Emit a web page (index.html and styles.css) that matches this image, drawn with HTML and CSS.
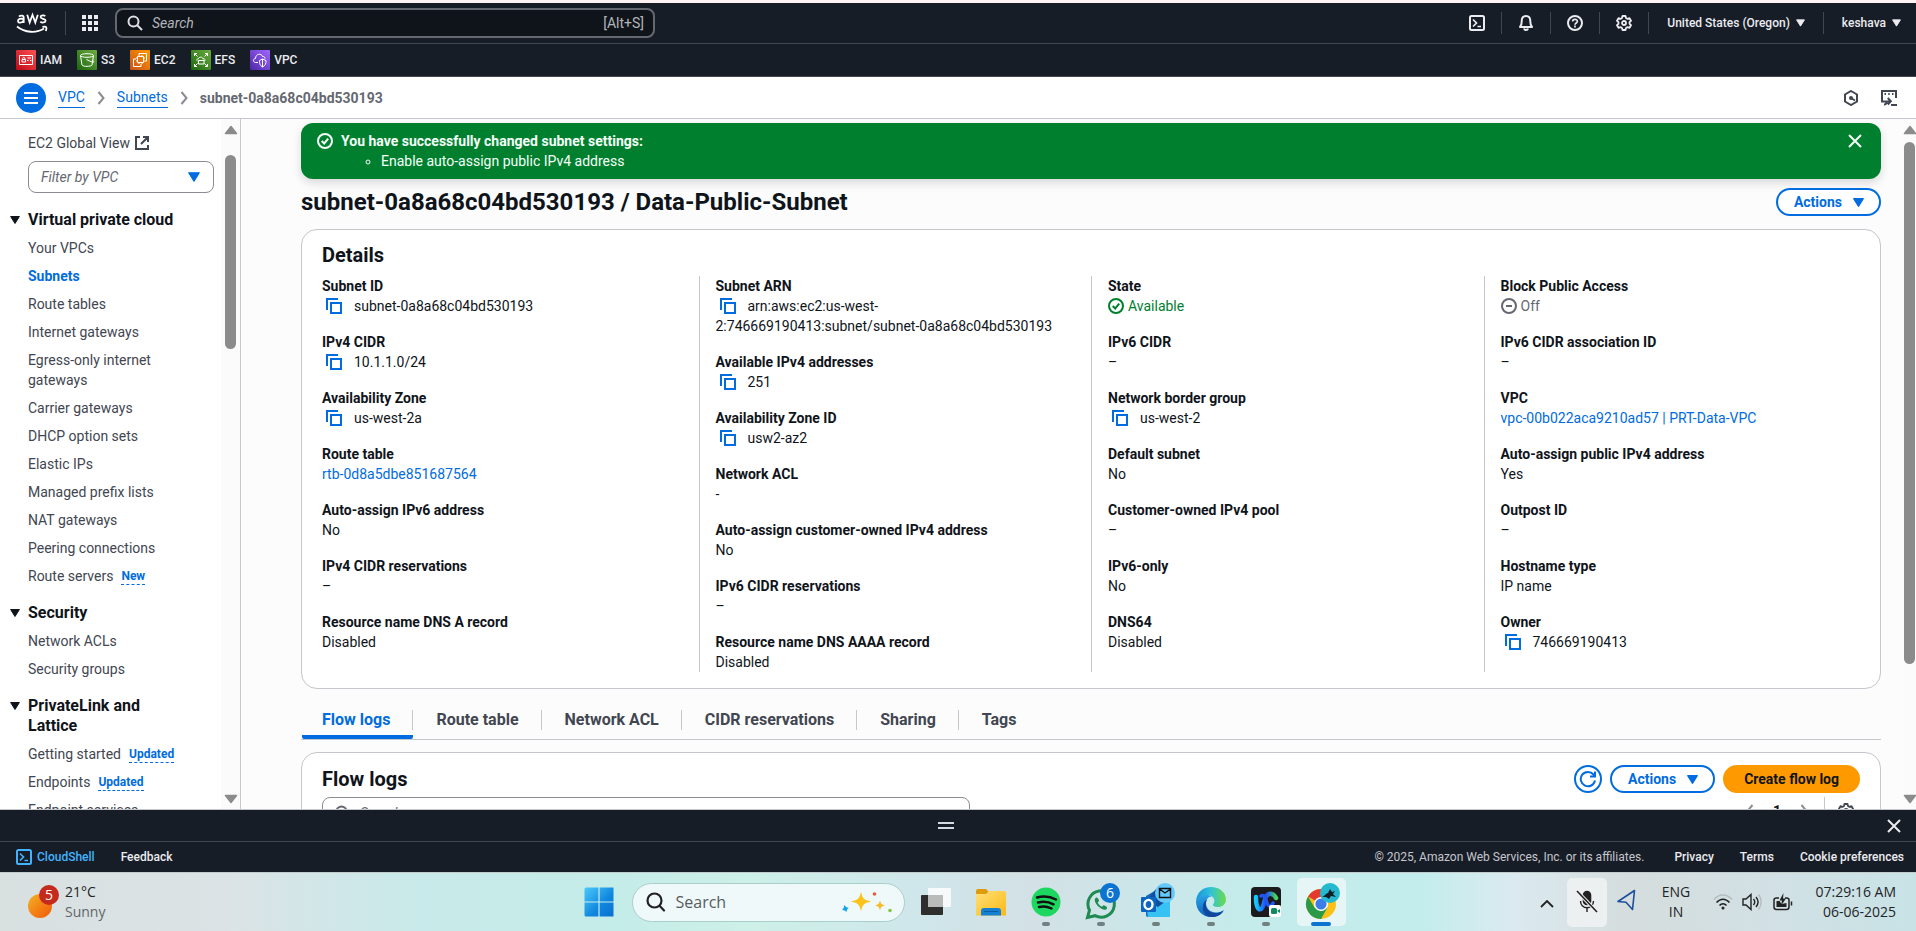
FILE: index.html
```html
<!DOCTYPE html>
<html lang="en">
<head>
<meta charset="utf-8">
<title>subnet-0a8a68c04bd530193 | VPC Console</title>
<link rel="stylesheet" href="styles.css">
</head>
<body>
<svg class="defs" aria-hidden="true">
  <symbol id="copy" viewBox="0 0 16 16"><path d="M1 12V1h11M5 5h10v10H5z" fill="none" stroke="currentColor" stroke-width="2"/></symbol>
  <symbol id="caret" viewBox="0 0 10 8"><path d="M.6.5h8.800L5 7.500z" fill="currentColor" stroke="currentColor" stroke-linejoin="round"/></symbol>
  <symbol id="close" viewBox="0 0 16 16"><path d="M2 2l12 12M14 2L2 14" fill="none" stroke="currentColor" stroke-width="2"/></symbol>
  <symbol id="check" viewBox="0 0 16 16"><circle cx="8" cy="8" r="7" fill="none" stroke="currentColor" stroke-width="2"/><path d="M4.700 8l2.500 2.500 4-4.800" fill="none" stroke="currentColor" stroke-width="2"/></symbol>
  <symbol id="search" viewBox="0 0 16 16"><circle cx="6.500" cy="6.500" r="5" fill="none" stroke="currentColor" stroke-width="2"/><path d="M10 10l5 5" stroke="currentColor" stroke-width="2"/></symbol>
  <symbol id="chevron" viewBox="0 0 8 14"><path d="M1.500 1l5 6-5 6" fill="none" stroke="currentColor" stroke-width="2"/></symbol>
  <symbol id="shell" viewBox="0 0 16 16"><rect x="1" y="1" width="14" height="14" rx="1.500" fill="none" stroke="currentColor" stroke-width="2"/><path d="M4 4.500L7.500 8 4 11.500M8.500 11.500H12" fill="none" stroke="currentColor" stroke-width="1.700"/></symbol>
  <symbol id="gear" viewBox="0 0 16 16"><path d="M6.500 1h3l.5 2 1.500.9 2-.7 1.500 2.600L13.500 7.200v1.600l1.500 1.400-1.500 2.600-2-.7-1.500.9-.5 2h-3L6 13l-1.500-.9-2 .7L1 10.200l1.500-1.400V7.200L1 5.800l1.500-2.600 2 .7L6 3z" fill="none" stroke="currentColor" stroke-width="1.800" stroke-linejoin="round"/><circle cx="8" cy="8" r="2" fill="none" stroke="currentColor" stroke-width="1.800"/></symbol>
  <symbol id="up" viewBox="0 0 14 10"><path d="M7 1.500L12.500 8.500h-11z" fill="currentColor" stroke="currentColor" stroke-width="1.500" stroke-linejoin="round"/></symbol>
  <linearGradient id="gRed" x1="0" y1="1" x2="1" y2="0"><stop stop-color="#bd0816"/><stop offset="1" stop-color="#ff5252"/></linearGradient>
  <linearGradient id="gGreen" x1="0" y1="1" x2="1" y2="0"><stop stop-color="#1b660f"/><stop offset="1" stop-color="#6cae3e"/></linearGradient>
  <linearGradient id="gOrange" x1="0" y1="1" x2="1" y2="0"><stop stop-color="#c8511b"/><stop offset="1" stop-color="#f90"/></linearGradient>
  <linearGradient id="gPurple" x1="0" y1="1" x2="1" y2="0"><stop stop-color="#4d27a8"/><stop offset="1" stop-color="#a166ff"/></linearGradient>
  <linearGradient id="gSun" x1="0" y1="0" x2="1" y2="1"><stop stop-color="#f2b428"/><stop offset=".6" stop-color="#f47a12"/><stop offset="1" stop-color="#ee5a0c"/></linearGradient>
  <linearGradient id="gWin" x1="0" y1="0" x2="1" y2="1"><stop stop-color="#4cc9fb"/><stop offset=".6" stop-color="#0f86de"/><stop offset="1" stop-color="#0a6fd0"/></linearGradient>
  <linearGradient id="gFold" x1="0" y1="0" x2="1" y2="1"><stop stop-color="#ffe07a"/><stop offset="1" stop-color="#fbb914"/></linearGradient>
  <linearGradient id="gEdge" x1="0" y1="0" x2="1" y2="0"><stop stop-color="#1794dd"/><stop offset=".5" stop-color="#31c3d8"/><stop offset="1" stop-color="#6edb46"/></linearGradient>
  <linearGradient id="gEdge2" x1="0" y1="0" x2="0" y2="1"><stop stop-color="#2aa5e4"/><stop offset="1" stop-color="#0b62c0"/></linearGradient>
  <linearGradient id="gWx" x1="0" y1="0" x2="1" y2="0"><stop stop-color="#16c8ff"/><stop offset=".5" stop-color="#1f4cff"/><stop offset="1" stop-color="#45d65c"/></linearGradient>
</svg>

<header class="topbar">
  <a class="logo" href="#" aria-label="AWS"><svg width="32" height="22" viewBox="0 0 32 22" fill="none" stroke="#fff" stroke-width="1.800"><path d="M3 4.600c1.200-1.400 4.700-1.600 4.700.9V11M7.700 7c-3-.6-5.700-.2-5.700 2 0 2.700 4.500 2 5.700-.6M11.200 2.800l2.500 7.700 2.800-7.700 2.800 7.700 2.500-7.700M29.300 4c-1.500-.9-4.700-.9-4.700 1.100 0 2.200 5 1.100 5 3.600 0 2.100-3.600 2.300-5.300 1"/><path d="M1 14.500c8 6.500 19.500 6.800 27 2M26.500 15c3.500-.8 5-.3 3.200 4" stroke-width="1.800"/></svg></a>
  <span class="sep"></span>
  <button class="icon-btn apps" aria-label="Services"><svg width="16" height="16" viewBox="0 0 16 16" fill="currentColor"><path d="M0 0h4v4H0zM6 0h4v4H6zM12 0h4v4h-4zM0 6h4v4H0zM6 6h4v4H6zM12 6h4v4h-4zM0 12h4v4H0zM6 12h4v4H6zM12 12h4v4h-4z"/></svg></button>
  <label class="global-search"><svg width="16" height="16"><use href="#search"/></svg><input type="text" placeholder="Search" aria-label="Search"><kbd>[Alt+S]</kbd></label>
  <div class="tools">
    <button class="icon-btn" aria-label="CloudShell"><svg width="16" height="16"><use href="#shell"/></svg></button><span class="sep"></span>
    <button class="icon-btn" aria-label="Notifications"><svg width="16" height="16" viewBox="0 0 16 16" fill="none" stroke="currentColor" stroke-width="2"><path d="M2 12c1.800-1.800 1.700-3.500 1.700-6C3.700 3 5.300 1 8 1s4.300 2 4.300 5c0 2.500-.1 4.200 1.700 6zM6 13.500c.5 2 3.500 2 4 0" stroke-linejoin="round"/></svg></button><span class="sep"></span>
    <button class="icon-btn" aria-label="Help"><svg width="16" height="16" viewBox="0 0 16 16" fill="none" stroke="currentColor" stroke-width="2"><circle cx="8" cy="8" r="7"/><path d="M5.600 6.600C5.600 3.500 10.400 3.700 10.400 6.300 10.400 8 8 7.900 8 9.800M8 10.600v1.800" stroke-width="1.700"/></svg></button><span class="sep"></span>
    <button class="icon-btn" aria-label="Settings"><svg width="16" height="16"><use href="#gear"/></svg></button><span class="sep"></span>
    <button class="menu-btn">United States (Oregon)<svg width="9" height="8"><use href="#caret"/></svg></button><span class="sep"></span>
    <button class="menu-btn account">keshava<svg width="9" height="8"><use href="#caret"/></svg></button>
  </div>
</header>

<nav class="favorites" aria-label="Favorites">
  <a href="#"><svg width="20" height="20" viewBox="0 0 20 20"><rect width="20" height="20" rx="1" fill="url(#gRed)"/><g fill="none" stroke="#fff"><path d="M3.500 5.500h13v9h-13zM6 9.500h3.500v2.500H6zM11 10.500h1.500M14 10.500h1.500M11.500 8h3.500M6.700 9.500V8.300c0-1.300 2.100-1.300 2.100 0v1.200"/></g></svg>IAM</a>
  <a href="#"><svg width="20" height="20" viewBox="0 0 20 20"><rect width="20" height="20" rx="1" fill="url(#gGreen)"/><g fill="none" stroke="#fff"><ellipse cx="10" cy="5.500" rx="6.500" ry="1.800"/><path d="M3.500 5.500L5 15c1 1.800 9 1.800 10 0l1.500-9.500M9.500 9.500l6 2.800c2 .5 1.500-1.300-.3-2.300"/></g></svg>S3</a>
  <a href="#"><svg width="20" height="20" viewBox="0 0 20 20"><rect width="20" height="20" rx="1" fill="url(#gOrange)"/><g fill="none" stroke="#fff"><path d="M7.500 6.500h6v6h-6zM9 5v1.500M12 5v1.500M9 12.500V14M12 12.500V14M6 8h1.500M6 11h1.500M13.500 8H15M13.500 11H15M9 5V3.500h7.500V11H15M6 9H3.500v7.500H11V14"/></g></svg>EC2</a>
  <a href="#"><svg width="20" height="20" viewBox="0 0 20 20"><rect width="20" height="20" rx="1" fill="url(#gGreen)"/><g fill="none" stroke="#fff"><path d="M3.500 6V3.500H6M3.500 3.500l3 3M14 3.500h2.500V6M16.500 3.500l-3 3M3.500 14v2.500H6M3.500 16.500l3-3M14 16.500h2.500V14M16.500 16.500l-3-3M6.500 11c-2-1 0-2.500.8-2 .5-2.500 4.200-2.500 4.700-.2 2.300-.3 2.500 1.800 1.300 2.200M7.500 10.500h5.500v3.500H7.500z"/></g></svg>EFS</a>
  <a href="#"><svg width="20" height="20" viewBox="0 0 20 20"><rect width="20" height="20" rx="1" fill="url(#gPurple)"/><g fill="none" stroke="#fff"><path d="M8 12.500H5.500C2.500 12.200 3 8.500 5.500 8.500 5.500 3.500 11.500 3 12.500 6.500c2-.3 2.500 1 2.500 2M9.500 10.500l3-1.500 3.500 1.500c.3 3-.8 5-3.500 6.500-2.500-1.500-3.200-3.500-3-6.500zM12.500 9v8"/></g></svg>VPC</a>
</nav>

<div class="crumb-bar">
  <button class="nav-toggle" aria-label="Toggle navigation"><svg width="14" height="12" viewBox="0 0 14 12" stroke="#fff" stroke-width="2"><path d="M0 1h14M0 6h14M0 11h14"/></svg></button>
  <nav class="crumbs" aria-label="Breadcrumb">
    <a href="#">VPC</a><svg width="8" height="14"><use href="#chevron"/></svg><a href="#">Subnets</a><svg width="8" height="14"><use href="#chevron"/></svg><span>subnet-0a8a68c04bd530193</span>
  </nav>
  <div class="crumb-tools">
    <button class="icon-btn" aria-label="Info"><svg width="16" height="16" viewBox="0 0 16 16" fill="none" stroke="currentColor" stroke-width="2"><path d="M8 1l6 3.500v7L8 15l-6-3.500v-7z"/><circle cx="8" cy="8" r="2" fill="currentColor" stroke="none"/><path d="M8 8l4 2.500"/></svg></button>
    <button class="icon-btn" aria-label="Panel"><svg width="16" height="16" viewBox="0 0 16 16" fill="none" stroke="currentColor" stroke-width="2"><path d="M5 11.500H1V1h14v7M3.500 4h1.500M7.200 4h1.500M11 4h1.500M10 15h6M3 14.500c1.500.2 2.500-1 3-3h3M6.800 8l3 3.200-3 3.300"/></svg></button>
  </div>
</div>

<div class="workspace">
  <aside class="sidebar">
    <div class="side-scroll">
      <a class="global-view" href="#">EC2 Global View<svg width="14" height="14" viewBox="0 0 14 14" fill="none" stroke="currentColor" stroke-width="2"><path d="M5 1H1v12h12V9M8 1h5v5M13 1L6 8"/></svg></a>
      <div class="filter"><select aria-label="Filter by VPC"><option>Filter by VPC</option></select><svg width="12" height="10"><use href="#caret"/></svg></div>
      <section><h3><svg width="10" height="8"><use href="#caret"/></svg>Virtual private cloud</h3>
        <ul><li><a href="#">Your VPCs</a></li><li><a class="current" href="#">Subnets</a></li><li><a href="#">Route tables</a></li><li><a href="#">Internet gateways</a></li><li><a href="#">Egress-only internet gateways</a></li><li><a href="#">Carrier gateways</a></li><li><a href="#">DHCP option sets</a></li><li><a href="#">Elastic IPs</a></li><li><a href="#">Managed prefix lists</a></li><li><a href="#">NAT gateways</a></li><li><a href="#">Peering connections</a></li><li><a href="#">Route servers</a><em>New</em></li></ul></section>
      <section><h3><svg width="10" height="8"><use href="#caret"/></svg>Security</h3>
        <ul><li><a href="#">Network ACLs</a></li><li><a href="#">Security groups</a></li></ul></section>
      <section><h3><svg width="10" height="8"><use href="#caret"/></svg>PrivateLink and Lattice</h3>
        <ul><li><a href="#">Getting started</a><em>Updated</em></li><li><a href="#">Endpoints</a><em>Updated</em></li><li><a href="#">Endpoint services</a></li></ul></section>
    </div>
    <div class="scrollbar"><svg width="14" height="10"><use href="#up"/></svg><div class="track"><i class="thumb thumb-side"></i></div><svg class="down" width="14" height="10"><use href="#up"/></svg></div>
  </aside>

  <main>
    <div class="page">
      <div class="flash" role="status">
        <svg width="16" height="16"><use href="#check"/></svg>
        <div><strong>You have successfully changed subnet settings:</strong><ul><li>Enable auto-assign public IPv4 address</li></ul></div>
        <button class="icon-btn" aria-label="Dismiss"><svg width="16" height="16"><use href="#close"/></svg></button>
      </div>
      <div class="title-row"><h1>subnet-0a8a68c04bd530193 / Data-Public-Subnet</h1><button class="btn">Actions<svg width="11" height="9"><use href="#caret"/></svg></button></div>

      <section class="card details">
        <h2>Details</h2>
        <div class="columns">
          <dl>
            <div><dt>Subnet ID</dt><dd><svg class="copy"><use href="#copy"/></svg>subnet-0a8a68c04bd530193</dd></div>
            <div><dt>IPv4 CIDR</dt><dd><svg class="copy"><use href="#copy"/></svg>10.1.1.0/24</dd></div>
            <div><dt>Availability Zone</dt><dd><svg class="copy"><use href="#copy"/></svg>us-west-2a</dd></div>
            <div><dt>Route table</dt><dd><a href="#">rtb-0d8a5dbe851687564</a></dd></div>
            <div><dt>Auto-assign IPv6 address</dt><dd>No</dd></div>
            <div><dt>IPv4 CIDR reservations</dt><dd>–</dd></div>
            <div><dt>Resource name DNS A record</dt><dd>Disabled</dd></div>
          </dl>
          <dl>
            <div><dt>Subnet ARN</dt><dd><svg class="copy"><use href="#copy"/></svg>arn:aws:ec2:us-west-<wbr><span class="nowrap">2:746669190413:subnet/subnet-0a8a68c04bd530193</span></dd></div>
            <div><dt>Available IPv4 addresses</dt><dd><svg class="copy"><use href="#copy"/></svg>251</dd></div>
            <div><dt>Availability Zone ID</dt><dd><svg class="copy"><use href="#copy"/></svg>usw2-az2</dd></div>
            <div><dt>Network ACL</dt><dd>-</dd></div>
            <div><dt>Auto-assign customer-owned IPv4 address</dt><dd>No</dd></div>
            <div><dt>IPv6 CIDR reservations</dt><dd>–</dd></div>
            <div><dt>Resource name DNS AAAA record</dt><dd>Disabled</dd></div>
          </dl>
          <dl>
            <div><dt>State</dt><dd class="status ok"><svg width="16" height="16"><use href="#check"/></svg>Available</dd></div>
            <div><dt>IPv6 CIDR</dt><dd>–</dd></div>
            <div><dt>Network border group</dt><dd><svg class="copy"><use href="#copy"/></svg>us-west-2</dd></div>
            <div><dt>Default subnet</dt><dd>No</dd></div>
            <div><dt>Customer-owned IPv4 pool</dt><dd>–</dd></div>
            <div><dt>IPv6-only</dt><dd>No</dd></div>
            <div><dt>DNS64</dt><dd>Disabled</dd></div>
          </dl>
          <dl>
            <div><dt>Block Public Access</dt><dd class="status off"><svg width="16" height="16" viewBox="0 0 16 16" fill="none" stroke="currentColor" stroke-width="2"><circle cx="8" cy="8" r="7"/><path d="M5 8h6"/></svg>Off</dd></div>
            <div><dt>IPv6 CIDR association ID</dt><dd>–</dd></div>
            <div><dt>VPC</dt><dd><a href="#">vpc-00b022aca9210ad57 | PRT-Data-VPC</a></dd></div>
            <div><dt>Auto-assign public IPv4 address</dt><dd>Yes</dd></div>
            <div><dt>Outpost ID</dt><dd>–</dd></div>
            <div><dt>Hostname type</dt><dd>IP name</dd></div>
            <div><dt>Owner</dt><dd><svg class="copy"><use href="#copy"/></svg>746669190413</dd></div>
          </dl>
        </div>
      </section>

      <div class="tabs" role="tablist">
        <button role="tab" aria-selected="true">Flow logs</button><button role="tab">Route table</button><button role="tab">Network ACL</button><button role="tab">CIDR reservations</button><button role="tab">Sharing</button><button role="tab">Tags</button>
      </div>

      <section class="card flow">
        <div class="flow-head"><h2>Flow logs</h2>
          <button class="btn round" aria-label="Refresh"><svg width="18" height="18" viewBox="0 0 18 18" fill="none" stroke="currentColor" stroke-width="2"><path d="M16 10.500A7.200 7.200 0 1 1 14.500 4.500L16 6.500M16 1.500v5h-5"/></svg></button>
          <button class="btn">Actions<svg width="11" height="9"><use href="#caret"/></svg></button>
          <button class="btn primary">Create flow log</button></div>
        <div class="flow-tools">
          <label class="table-search"><svg width="16" height="16"><use href="#search"/></svg><input type="text" placeholder="Search" aria-label="Search flow logs"></label>
          <div class="pager"><button class="icon-btn flip" aria-label="Previous page"><svg width="8" height="14"><use href="#chevron"/></svg></button><b>1</b><button class="icon-btn" aria-label="Next page"><svg width="8" height="14"><use href="#chevron"/></svg></button><span class="rule"></span><button class="icon-btn prefs" aria-label="Preferences"><svg width="16" height="16"><use href="#gear"/></svg></button></div>
        </div>
      </section>
    </div>
    <div class="scrollbar"><svg width="14" height="10"><use href="#up"/></svg><div class="track"><i class="thumb thumb-main"></i></div><svg class="down" width="14" height="10"><use href="#up"/></svg></div>
  </main>
</div>

<div class="split-panel"><span></span><svg width="16" height="7" viewBox="0 0 16 7" fill="#d5d9e0"><path d="M0 0h16v2H0zM0 5h16v2H0z"/></svg><span></span><button class="icon-btn" aria-label="Close panel"><svg width="16" height="16"><use href="#close"/></svg></button></div>
<footer class="console-footer">
  <a class="shell" href="#"><svg width="16" height="16"><use href="#shell"/></svg>CloudShell</a><a class="feedback" href="#">Feedback</a>
  <span class="legal">© 2025, Amazon Web Services, Inc. or its affiliates.</span><a href="#">Privacy</a><a href="#">Terms</a><a href="#">Cookie preferences</a>
</footer>

<div class="taskbar">
  <div class="weather">
    <svg width="32" height="34" viewBox="0 0 32 34"><circle cx="12" cy="21" r="12" fill="url(#gSun)"/><circle cx="21" cy="10" r="10" fill="#c42b1c"/><text x="21" y="15" text-anchor="middle" class="badge-num">5</text></svg>
    <div><span>21°C</span><span class="dim">Sunny</span></div>
  </div>
  <div class="dock">
    <button class="slot" aria-label="Start"><svg width="30" height="30" viewBox="0 0 30 30" fill="url(#gWin)"><path d="M.5 2q0-1.500 1.500-1.500h27.500V29.500H2Q.5 29.500.5 28z"/><path d="M15 0v30M0 15h30" stroke="#c8efee" stroke-width="1.200"/></svg></button>
    <label class="win-search"><svg width="20" height="20" viewBox="0 0 20 20" fill="none" stroke="#222" stroke-width="2.200" stroke-linecap="round"><circle cx="8.500" cy="8.500" r="7"/><path d="M13.800 14l4.200 4.500"/></svg><input type="text" placeholder="Search" aria-label="Search Windows"><svg width="52" height="22" viewBox="0 0 52 22"><path d="M20 1c2 7 2.500 7.500 10 9.500-7.500 2-8 2.500-10 9.500-2-7-2.500-7.500-10-9.500C17.500 8.500 18 8 20 1z" fill="#fbc21c"/><path d="M39 9.500c1 3.500 1.300 3.800 5 5-3.700 1-4 1.300-5 5-1-3.700-1.300-4-5-5 3.700-1.200 4-1.500 5-5z" fill="#f9b92a"/><path d="M3.500 14l1.800 2.200 2.400.6-1.700 1.900-.4 2.400-2-1.700-2.500-.3 1.500-2.200z" fill="#12a5ec"/><circle cx="33.500" cy="3" r="1.800" fill="#ee5a30"/><circle cx="49" cy="19.500" r="1.800" fill="#86c440"/></svg></label>
    <button class="slot" aria-label="Task view"><svg width="30" height="30" viewBox="0 0 30 30"><rect y="8" width="22" height="20" rx="1" fill="#2e2e2c"/><rect x="7" y="1" width="23" height="19" rx="1" fill="#fff" opacity=".8"/><path d="M7 8h15v12H7z" fill="#b9baba"/></svg></button>
    <button class="slot" aria-label="File Explorer"><svg width="30" height="30" viewBox="0 0 30 30"><path d="M0 4q0-2 2-2h8l3 3h-1v6H0z" fill="#dd9b0e"/><path d="M0 7h10l3-3h15q2 0 2 2v22.500H0z" fill="url(#gFold)"/><path d="M5 28.500V24q0-3 3-3h14q3 0 3 3v4.500z" fill="#1580d2"/><path d="M8 24.500h14" stroke="#0a5aa5"/></svg></button>
    <button class="slot on" aria-label="Spotify"><svg width="30" height="30" viewBox="0 0 30 30"><circle cx="15" cy="15" r="14.500" fill="#1ed760"/><path d="M6 10.500c6-1.800 13.500-1 19 2M7 15.500c5-1.400 11-.7 15.500 1.800M8 20c4-1 8.500-.6 12.500 1.500" fill="none" stroke="#111" stroke-width="2.500" stroke-linecap="round"/></svg></button>
    <button class="slot on" aria-label="WhatsApp"><svg width="38" height="38" viewBox="-4 -6 38 38"><path d="M1.500 28.500l2-7.300A13.200 13.200 0 1 1 9 26.700z" fill="none" stroke="#1f8a52" stroke-width="3"/><path d="M10 8.500c-3 2 0 7 3 9.500s6.500 3.800 8 1.500c.8-1.500-2.800-3.300-3.600-3.200l-1.400 1.500c-2-.8-3.500-2.500-4.300-4.200L13 12c.2-.8-1.200-4-3-3.500z" fill="#1f8a52"/><circle cx="24" cy="4" r="10" fill="#0b74d1"/><text x="24" y="9" text-anchor="middle" class="badge-num">6</text></svg></button>
    <button class="slot on" aria-label="Outlook"><svg width="38" height="38" viewBox="-4 -6 38 38"><path d="M5 7l12-7 12 7v19q0 2-2 2H7q-2 0-2-2z" fill="#1668b8"/><path d="M5 14l24-7v19.500q0 1.500-1.500 1.500H7z" fill="#38c2f3"/><path d="M5 12l12 6 12-9V4L15 0z" fill="#0f4fa0"/><rect y="8" width="15" height="15" rx="1" fill="#0d65c2"/><ellipse cx="7.500" cy="15.500" rx="4" ry="4.600" fill="none" stroke="#fff" stroke-width="2.400"/><circle cx="24" cy="4" r="10" fill="#63c8fb"/><path d="M18.500-.5h11v9h-11zM18.500 0l5.500 4 5.500-4" fill="none" stroke="#111" stroke-width="1.400"/></svg></button>
    <button class="slot on" aria-label="Edge"><svg width="30" height="30" viewBox="0 0 30 30"><path d="M0 14C1 5 7 0 15 0c8.500 0 15 5.500 15 12.500 0 5-4 7.500-8 7.500-3.500 0-5.500-1.500-5-2.500 1.500-2 2-4 .5-6.500C14 6 4 7 0 14z" fill="url(#gEdge)"/><path d="M0 14C3 7.500 11 6 15.500 9.500 12 9.500 10 13 10 16c0 6 5 10 11 9.500 2.500 0 5-1 7-2.500C25 28 20 30 15 30 7 30 0 24 0 14z" fill="url(#gEdge2)"/><path d="M11 12.500c-3 6 0 12.500 7 13.500 4 .5 7-.8 9.500-2.500C24 31 14 31 10.500 28.500 5 24 6 15 11 12.500z" fill="#12489c"/></svg></button>
    <button class="slot on" aria-label="Webex"><svg width="30" height="30" viewBox="0 0 30 30"><rect width="30" height="30" rx="4" fill="#1b1b1d"/><path d="M5 10c0 10 2.500 13 5 12 3-1 3-9 5-12.500S22 5 25 11" fill="none" stroke="url(#gWx)" stroke-width="4.500" stroke-linecap="round"/><path d="M10 9c4-2 4.500 3 6 7s4 4.500 6 0" fill="none" stroke="#2356f0" stroke-width="3.500" stroke-linecap="round"/><rect x="18" y="18" width="12" height="12" rx="2" fill="#fff"/><rect x="20" y="21" width="6" height="6" rx="1.500" fill="#108a62"/><path d="M26 24l3-2v4z" fill="#108a62"/></svg></button>
    <button class="slot on active" aria-label="Chrome"><svg width="38" height="38" viewBox="-4 -6 38 38"><circle cx="15" cy="15" r="15" fill="#fbc116"/><path d="M15 15L2 7.500A15 15 0 0 1 28 7.500z" fill="#e33b2e"/><path d="M2 7.500A15 15 0 0 0 15 30l6.500-11.500L15 22 8.500 18.500z" fill="#2a9a48"/><path d="M15 0a15 15 0 0 1 13 7.500H15z" fill="#e33b2e"/><circle cx="15" cy="15" r="7" fill="#fff"/><circle cx="15" cy="15" r="5.600" fill="#3b7de9"/><circle cx="24" cy="4" r="10" fill="#25b9cf"/><path d="M16 8c3-1 4-4 6-4l2-4 2 3 3-1-2 3 3 3-5-1-2 3-3-2z" fill="#12202a"/></svg></button>
  </div>
  <div class="tray">
    <button class="plain" aria-label="Show hidden icons"><svg width="14" height="8" viewBox="0 0 14 8" fill="none" stroke="#222" stroke-width="1.800"><path d="M1 7l6-6 6 6"/></svg></button>
    <button class="mic" aria-label="Microphone muted"><svg width="22" height="24" viewBox="0 0 22 24" fill="none" stroke="#222" stroke-width="1.600"><rect x="7.500" y="1.500" width="7" height="13" rx="3.500" fill="#222"/><path d="M4.500 11c0 9 13 9 13 0M11 18v4" stroke-width="1.400"/><path d="M1 1l20 21" stroke="#eee" stroke-width="3.500"/><path d="M1 1l20 21"/></svg></button>
    <button class="plain loc" aria-label="Location"><svg width="19" height="22" viewBox="0 0 19 22" fill="none" stroke="#1c4fa0" stroke-width="1.600" stroke-linejoin="round"><path d="M17.500 1.500L1 12.500l8 .8 6.500 7.200z"/></svg></button>
    <div class="lang"><span>ENG</span><span>IN</span></div>
    <svg class="net" width="20" height="16" viewBox="0 0 20 16" fill="none" stroke="#222" stroke-width="1.500"><path d="M1 5.500c5-6 13-6 18 0" stroke="#b4bcc0"/><path d="M3.500 8.500c4-4.500 9-4.500 13 0M6.500 11.500c2-2.500 5-2.500 7 0"/><circle cx="10" cy="14" r="1.500" fill="#222" stroke="none"/></svg>
    <svg class="vol" width="20" height="18" viewBox="0 0 20 18" fill="none" stroke="#222" stroke-width="1.400"><path d="M1 6h3l5-4.500v15L4 12H1zM11.500 6c1.500 1.800 1.500 4.200 0 6M14 4c2.500 3 2.500 7 0 10"/><path d="M16.500 1.500c3.500 4.500 3.500 10.500 0 15" stroke="#b4bcc0"/></svg>
    <svg class="bat" width="20" height="18" viewBox="0 0 20 18" fill="none" stroke="#222" stroke-width="1.500"><path d="M6 5H3.500Q1 5 1 7v7q0 2.500 2.500 2.500h10q2.500 0 2.500-2.500V7q0-2-2.500-2H12M18.500 8.500v4"/><path d="M3.500 8h3l2 3 5-1v4h-10z" fill="#222" stroke="none"/><path d="M10.500 0L6.500 7.500H9l-1 5 5-7H10z" fill="#222" stroke="none"/></svg>
    <div class="clock"><span>07:29:16 AM</span><span>06-06-2025</span></div>
  </div>
</div>
</body>
</html>
```
FILE: styles.css
```css
*{box-sizing:border-box}
body{margin:0;height:100vh;display:flex;flex-direction:column;overflow:hidden;border-top:3px solid #fdf3f2;background:#fff;color:#0f141a;font:14px/20px Roboto,"Open Sans",sans-serif}
a{color:#006ce0;text-decoration:none}
h1,h2,h3,ul,dl,dd{margin:0;padding:0}
ul{list-style:none}
svg{flex:none}
button,input,select{font:inherit;color:inherit}
button{border:0;background:none;padding:0;cursor:pointer}
input{border:0;background:none;outline:0;min-width:0;padding:0}
.defs{position:absolute;width:0;height:0}
.icon-btn{display:flex;align-items:center;justify-content:center}

.topbar{flex:none;height:41px;display:flex;align-items:center;background:#161d26;border-bottom:1px solid #424650;color:#ebebf0;padding:0 15px 0 16px}
.logo{display:flex;width:49px}
.sep{width:1px;height:24px;background:#424650}
.apps{margin:0 17px 0 16px}
.global-search{display:flex;align-items:center;gap:9px;flex:0 1 540px;height:30px;border:2px solid #656871;border-radius:8px;background:#0f141a;padding:0 9px 0 10px;color:#b4b4bb}
.global-search svg{color:#dedee3}
.global-search input{flex:1;font-style:italic}
.global-search input::placeholder{color:#b4b4bb;opacity:1}
kbd{font:inherit}
.tools{margin-left:auto;display:flex;align-items:center;gap:16px}
.tools .sep{height:22px}
.menu-btn{display:flex;align-items:center;gap:6px;padding:0 2px;font-size:12px;font-weight:500}
.menu-btn.account{padding:0 0 0 2px}

.favorites{flex:none;height:33px;display:flex;align-items:center;gap:15px;padding:0 16px;background:#161d26;border-bottom:1px solid #424650}
.favorites a{display:flex;align-items:center;gap:4px;color:#ebebf0;font-size:12px;font-weight:500}

.crumb-bar{flex:none;height:42px;display:flex;align-items:center;padding:0 19px 0 16px;border-bottom:1px solid #c6c6cd}
.nav-toggle{width:30px;height:30px;border-radius:50%;background:#006ce0;display:flex;align-items:center;justify-content:center}
.crumbs{display:flex;align-items:center;gap:12px;margin-left:12px;color:#8c8c94}
.crumbs a{border-bottom:1px solid #006ce0;line-height:19px}
.crumbs span{color:#656871;font-weight:700}
.crumb-tools{margin-left:auto;display:flex;gap:22px;color:#424650}

.workspace{flex:1;min-height:0;display:flex;border-bottom:1px solid #c6c6cd}
.sidebar{flex:none;width:241px;border-right:1px solid #c6c6cd;display:flex;overflow:hidden}
.side-scroll{flex:1;padding:14px 7px 0 28px;overflow:hidden}
.global-view{display:flex;align-items:center;gap:5px;color:#424650;margin-bottom:8px}
.filter{display:grid;align-items:center;margin-bottom:17px;color:#006ce0}
.filter select,.filter svg{grid-area:1/1}
.filter select{appearance:none;width:100%;height:32px;border:1px solid #8c8c94;border-radius:8px;background:#fff;padding:0 12px;font-style:italic;color:#656871}
.filter svg{justify-self:end;margin-right:14px;pointer-events:none}
.side-scroll section{margin-bottom:17px}
h3{font-size:16px;line-height:20px;font-weight:700;padding-right:24px}
h3 svg{float:left;margin:6px 0 0 -18px}
.side-scroll ul{margin-top:8px;display:flex;flex-direction:column;gap:8px;padding-right:24px}
.side-scroll li{display:flex;align-items:center;gap:8px}
.side-scroll li a{color:#424650}
.side-scroll li a.current{color:#006ce0;font-weight:700}
.side-scroll em{font-style:normal;font-size:12px;line-height:16px;font-weight:700;color:#006ce0;border-bottom:1px dashed #006ce0}

.scrollbar{flex:none;width:19px;background:#fbfbfb;color:#8b8b8b;display:flex;flex-direction:column;align-items:center;padding:6px 0 5px}
.scrollbar .down{transform:rotate(180deg)}
.track{flex:1;width:11px;padding:7px 0}
.thumb{display:block;border-radius:6px;background:#8b8b8b}
.thumb-side{height:30%;margin-top:13px}
.thumb-main{height:81%}

main{flex:1;min-width:0;display:flex;background:#fcfcfd;overflow:hidden}
main .scrollbar{width:13px}
.page{flex:1;min-width:0;padding:4px 22px 0 60px}
.flash{display:flex;align-items:flex-start;gap:8px;background:#00802f;color:#f5fff8;border-radius:12px;padding:8px 18px 8px 16px;box-shadow:0 4px 10px rgba(0,7,22,.14)}
.flash>svg,.flash>button{margin-top:2px}
.flash div{flex:1}
.flash li{list-style:circle;margin-left:40px}
.title-row{display:flex;align-items:center;justify-content:space-between;margin:9px 0 13px}
h1{font-size:24px;line-height:28px;font-weight:700}
.btn{display:flex;align-items:center;justify-content:center;gap:11px;height:28px;border:2px solid #006ce0;border-radius:20px;background:#fff;color:#006ce0;font-weight:700;padding:0 15px 0 16px}
.btn.round{width:28px;padding:0}
.btn.primary{background:#f90;border-color:#f90;color:#0f141a;padding:0 19px}
.card{background:#fff;border:1px solid #c6c6cd;border-radius:16px;padding:12px 20px 16px}
h2{font-size:20px;line-height:26px;font-weight:700}
.columns{display:grid;grid-template-columns:repeat(4,minmax(0,1fr));gap:32px;margin-top:8px}
.columns dl{display:flex;flex-direction:column;gap:16px}
.columns dl+dl{margin-left:-16px;padding-left:16px;border-left:1px solid #c6c6cd}
dt{font-weight:700}
.copy{width:16px;height:16px;color:#006ce0;vertical-align:-3px;margin:0 12px 0 4px}
.nowrap{white-space:nowrap}
.status{display:flex;align-items:center;gap:4px}
.ok{color:#00802f}
.off{color:#656871}

.tabs{display:flex;margin-top:16px;border-bottom:1px solid #c6c6cd}
.tabs button{position:relative;padding:5px 23px;font-size:16px;font-weight:700;line-height:20px;color:#424650;border-bottom:4px solid transparent}
.tabs button:first-child{margin-left:1px;padding-left:20px}
.tabs button:not(:last-child)::after{content:"";position:absolute;right:0;top:5px;height:20px;border-right:1px solid #c6c6cd}
.tabs button[aria-selected]{color:#006ce0;border-bottom-color:#006ce0;border-radius:2px}
.flow{margin-top:12px;height:300px}
.flow-head{display:flex;align-items:center;gap:8px}
.flow-head h2{margin-right:auto}
.flow-tools{display:flex;justify-content:space-between;align-items:flex-start;margin-top:4px}
.table-search{display:flex;align-items:center;gap:9px;width:648px;height:32px;border:1px solid #8c8c94;border-radius:8px;padding:0 12px;color:#656871}
.table-search input::placeholder{color:#656871;opacity:1;font-style:italic}
.pager{display:flex;align-items:center;gap:19px;height:28px;color:#8c8c94;padding-right:6px}
.pager b{color:#0f141a}
.flip{transform:scaleX(-1)}
.rule{width:1px;height:28px;background:#c6c6cd;margin-left:-3px}
.prefs{color:#424650;margin-left:-6px}

.split-panel{flex:none;height:31px;display:grid;grid-template-columns:1fr auto 1fr auto;align-items:center;padding:0 14px;background:#161d26;color:#ebebf0}
.split-panel button{margin-left:8px}
.console-footer{flex:none;height:31px;display:flex;align-items:center;gap:26px;border-top:1px solid #424650;background:#161d26;padding:0 12px 0 16px;font-size:12px}
.console-footer a{color:#ebebf0;font-weight:500}
.console-footer .shell{display:flex;align-items:center;gap:5px;color:#42b4ff}
.legal{margin-left:auto;margin-right:4px;color:#c6c6cd}

.taskbar{flex:none;height:59px;display:flex;align-items:center;font:15px/20px "Open Sans","Noto Sans",sans-serif;color:#1f2426;background:linear-gradient(90deg,#d9e0e0 0,#dbe3e6 12%,#c8eaea 22%,#c4ece8 32%,#cdf0e8 39%,#cfe6ea 48%,#d3e1e6 54%,#c5ebeb 65%,#c2edec 74%,#dbeaf0 79%,#d5dddd 85%,#d2e0e4 92%,#c8e3e6 100%);border-top:1px solid #c3cccd}
.weather{flex:1;display:flex;gap:5px;align-items:center;padding-left:28px}
.weather div,.lang,.clock{display:flex;flex-direction:column;font-size:14px}
.dim{color:#5f6769}
.badge-num{font-size:14px;fill:#fff}
.dock{display:flex;align-items:center;padding-right:4px}
.slot{position:relative;width:55px;height:58px;display:flex;align-items:center;justify-content:center}
.slot svg{position:relative}
.slot.on::after{content:"";position:absolute;left:50%;bottom:5px;width:8px;height:4px;margin-left:-4px;border-radius:2px;background:#6f8181}
.slot.active::before{content:"";position:absolute;inset:5px 3px;border-radius:5px;background:#e6f6f6}
.slot.active::after{width:20px;margin-left:-10px;background:#0b74d1}
.win-search{display:flex;align-items:center;width:273px;height:39px;margin:0 4px 0 5px;border:1px solid #a9cfcd;border-radius:20px;background:#f0f9fa;padding:0 11px 0 13px;gap:10px}
.win-search input{flex:1;font-size:16px}
.win-search input::placeholder{color:#555d5e;opacity:1}
.tray{flex:1;display:flex;align-items:center;justify-content:flex-end;padding-right:20px}
.mic{width:40px;height:49px;margin:0 10px 0 13px;border-radius:5px;background:#ecf0f0;display:flex;align-items:center;justify-content:center}
.loc{margin-right:25px}
.lang{align-items:center;width:30px;margin-right:22px}
.net{margin-right:9px}
.vol{margin-right:11px}
.bat{margin-right:20px}
.clock{align-items:flex-end;min-width:83px}
```
